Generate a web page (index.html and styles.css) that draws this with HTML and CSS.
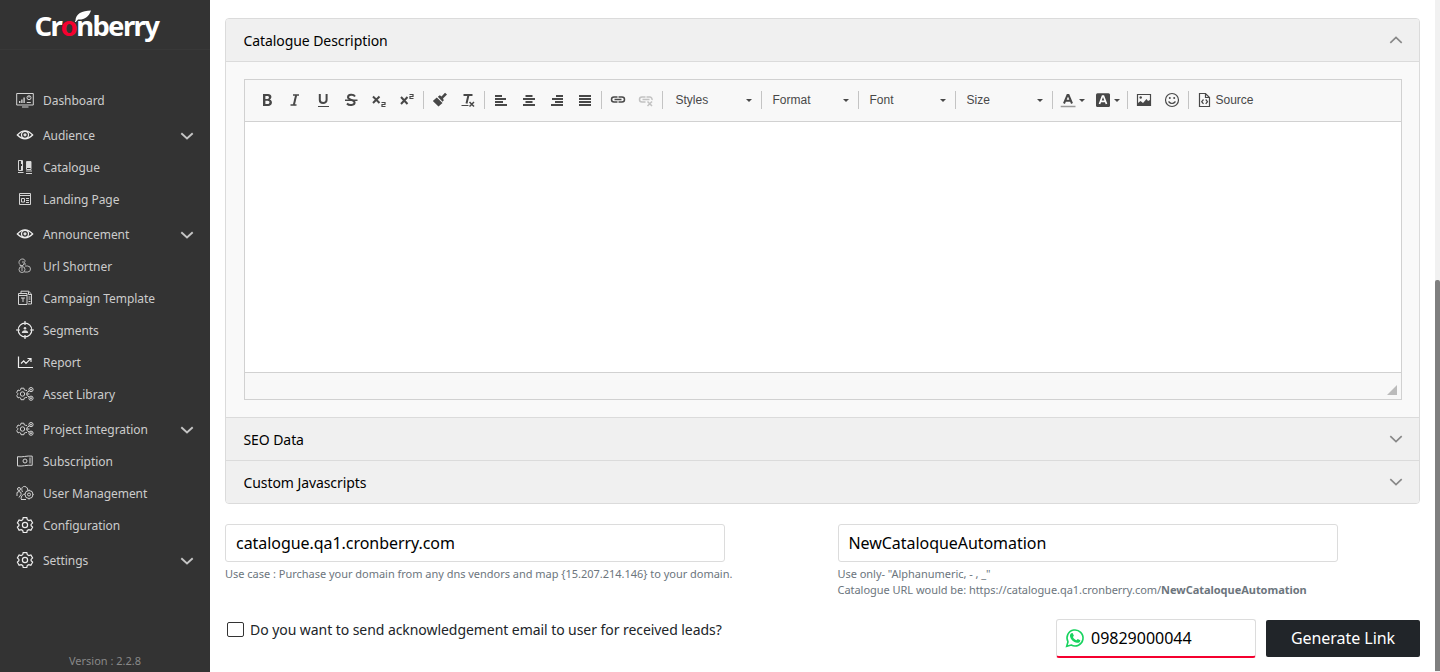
FILE: index.html
```html
<!DOCTYPE html>
<html lang="en">
<head>
<meta charset="utf-8">
<title>Cronberry</title>
<link rel="stylesheet" href="styles.css">
</head>
<body>
<svg class="defs" aria-hidden="true">
  <symbol id="eye" viewBox="0 0 18 18"><path d="M1.300 9Q9 .7 16.700 9Q9 16.700 1.300 9Z"/><circle cx="9" cy="8.800" r="3.500"/><circle class="fill" cx="9" cy="8.800" r="1.600"/></symbol>
  <symbol id="gear" viewBox="0 0 18 18"><path d="M7.200 1.600h3.600l.5 2.100 1.500.9 2.100-.7 1.700 3-1.500 1.500v1.300l1.500 1.500-1.700 3-2.100-.6-1.500.8-.5 2.100H7.200l-.5-2.100-1.500-.8-2.100.6-1.700-3 1.500-1.500V8.400L1.400 6.900l1.700-3 2.100.7 1.500-.9z"/><circle cx="9" cy="9" r="2.600"/></symbol>
  <symbol id="gears" viewBox="0 0 18 18"><path d="M11 5.500 9.500 5.300 8.300 4.900 7.900 3.200H5L4.600 4.900l-1 .6-1.600-.5L.7 7.400l1.100 1.100v1l-1.100 1.100L2 12.900l1.600-.5 1 .6.4 1.700h2.900l.4-1.700 1.200-.4 1.500-.2"/><circle cx="6.500" cy="9" r="2.200"/><path d="M13.200 6 10.800 7.700v2.600l2.400 1.700M10.800 9h2.600"/><circle cx="15" cy="4.600" r="2.100"/><circle cx="15" cy="13.200" r="2.100"/><circle class="fill" cx="15" cy="4.600" r=".9"/><circle class="fill" cx="15" cy="13.200" r=".9"/></symbol>
  <symbol id="down" viewBox="0 0 14 10"><path d="M1.300 2.200 7 7.500 12.700 2.200"/></symbol>
</svg>
<div class="app">
  <aside class="sidebar">
    <div class="brand">
      <div class="logo">Cr<span class="logo-o">o</span>nberry</div>
      <svg class="leaf" width="20" height="14" viewBox="0 0 20 14"><path d="M2.500 11.500C2.500 5 9 1.500 18 1.500C16 8 11 11 5 10.500L2.800 13H1.800Z"/></svg>
    </div>
    <nav class="nav">
      <a class="item"><svg class="ico" viewBox="0 0 18 18"><path d="M.7 2.500h16.600v11.500H.7zM6 16h6.500"/><path class="thick" d="M3.700 12v-2M5.900 12V8.500M8.100 12V6.500"/><circle cx="13" cy="6.700" r="2"/><path d="M10.800 11.500h4M13 6.700V5"/></svg><span>Dashboard</span></a>
      <a class="item drop"><svg class="ico bright"><use href="#eye"/></svg><span>Audience</span><svg class="chev"><use href="#down"/></svg></a>
      <a class="item"><svg class="ico" viewBox="0 0 18 18"><path d="M2.500 2.500h4v10h-4zM10.500 3.500h4.500v8h-4.500zM2 14.500h5.500M10 13h6M10 15.500h6"/><path class="fill" d="M5 3h2v3H5zM5 8h2v4H5zM11 4h4v6h-4z"/></svg><span>Catalogue</span></a>
      <a class="item"><svg class="ico" viewBox="0 0 18 18"><path d="M3.500 3.500h11v11h-11zM3.500 5.500h11M5.500 8.500h3v3.500h-3zM10 8.500h3M10 10.500h3M10 12.500h3"/></svg><span>Landing Page</span></a>
      <a class="item drop"><svg class="ico bright"><use href="#eye"/></svg><span>Announcement</span><svg class="chev"><use href="#down"/></svg></a>
      <a class="item"><svg class="ico thin" viewBox="0 0 18 18"><path d="M4 7.500C1.500 5.500 4 1.500 7 2c2 .3 2.500 2 1.500 3.500L7 8.500H4zM6 5h2"/><circle cx="6" cy="12.500" r="3"/><path d="M5 11h2M5 13h2M9 9h2.500a3 3 0 0 1 0 6H8.500M9 8V6"/></svg><span>Url Shortner</span></a>
      <a class="item"><svg class="ico" viewBox="0 0 18 18"><path d="M5 4V2.200h7.500L15.500 5v10H12M12.500 2.500V5.500h3M2.500 4.500h8.500V15.500H2.500zM2.500 6.500H11M5 9h4M7 9v4M12.500 8h2M12.500 10h2M12.500 12.500h2"/></svg><span>Campaign Template</span></a>
      <a class="item"><svg class="ico bright" viewBox="0 0 18 18"><circle cx="9" cy="9" r="6.800"/><path d="M9 0v4M9 14v4M0 9h4M14 9h4"/><circle class="fill" cx="9" cy="7.300" r="1.300"/><path class="fill" d="M5.800 12c0-3.600 6.400-3.600 6.400 0z"/></svg><span>Segments</span></a>
      <a class="item"><svg class="ico bright" viewBox="0 0 18 18"><path d="M2.500 3.500v11h14.500M5 10.500l2.700-2.700L10 10.300l4.500-4.500M11.500 5.500H15V9"/></svg><span>Report</span></a>
      <a class="item"><svg class="ico"><use href="#gears"/></svg><span>Asset Library</span></a>
      <a class="item drop"><svg class="ico"><use href="#gears"/></svg><span>Project Integration</span><svg class="chev"><use href="#down"/></svg></a>
      <a class="item"><svg class="ico" viewBox="0 0 18 18"><path d="M1.500 4.700c5 .8 9-1.200 14.700-.6v9.200c-5.700-.6-9.700 1.400-14.700.6zM14 5.500v6"/><circle cx="9" cy="9" r="2"/></svg><span>Subscription</span></a>
      <a class="item"><svg class="ico" viewBox="0 0 18 18"><circle cx="3" cy="5" r="1.500"/><path d="M1 12V8.500l2-1 2 1v2L3 13.500M6.500 8C4.500 4 7 2 9 2.500s3 2 2.500 4M5 15.500h5M5 15c0-3 2-5 4-5"/><circle cx="13" cy="10.500" r="4"/><circle cx="13" cy="10.500" r="1.500"/><path d="M13 5.500v1M13 14.500v1M17.500 10.500h-1"/></svg><span>User Management</span></a>
      <a class="item"><svg class="ico bright"><use href="#gear"/></svg><span>Configuration</span></a>
      <a class="item drop"><svg class="ico bright"><use href="#gear"/></svg><span>Settings</span><svg class="chev"><use href="#down"/></svg></a>
    </nav>
    <div class="version">Version : 2.2.8</div>
  </aside>

  <main class="main">
    <section class="accordion">
      <header class="acc-head"><span>Catalogue Description</span><svg class="acc-chev up"><use href="#down"/></svg></header>
      <div class="acc-body">
        <div class="editor">
          <div class="toolbar">
            <span class="btn"><svg viewBox="0 0 16 16"><path class="fill" fill-rule="evenodd" d="M4 2h5c4.200 0 4.300 4.500 1.700 5.600 3.500 1 2.900 6.400-1.500 6.400H4zM6.400 4v2.900h2c2.100 0 2.100-2.900 0-2.900zm0 4.700V12h2.300c2.400 0 2.400-3.300 0-3.300z"/></svg></span>
            <span class="btn"><svg viewBox="0 0 16 16"><path class="w2" d="M9.200 3 6.800 13"/><path class="w15" d="M6 3h6M3.500 13h6"/></svg></span>
            <span class="btn"><svg viewBox="0 0 16 16"><path class="w2" d="M4.800 2v6c0 4 6.800 4 6.800 0V2"/><path d="M3 14.500h11"/></svg></span>
            <span class="btn"><svg viewBox="0 0 16 16"><path class="w2" d="M12 4.500C10.500 2 5 2.200 5 5.200S11.600 7.500 11.600 10.500 6 13.800 4 11.500"/><path class="w15" d="M2 8.200h12.500"/></svg></span>
            <span class="btn"><svg viewBox="0 0 16 16"><path class="w2" d="M2 4.500 8.500 11M8.500 4.500 2 11"/><path d="M10.500 10.500H14v2h-3v2h3.500"/></svg></span>
            <span class="btn"><svg viewBox="0 0 16 16"><path class="w2" d="M2 5 8.500 12M8.500 5 2 12"/><path d="M10.500 2.500H14v2h-3v2h3.500"/></svg></span>
            <i class="sep"></i>
            <span class="btn"><svg viewBox="0 0 16 16"><path class="fill" d="m4.800 5.500 5.700 5.500-4 3.500L.8 9zM5.800 4.700l2-1.400 1.700 1.200L13 .8l2 1.700-4 4 .8 1.700-1.200 1.500z"/></svg></span>
            <span class="btn"><svg viewBox="0 0 16 16"><path class="w2" d="M3.500 3h9M8.500 3 6.500 11.500"/><path d="M1.500 13.500h7"/><path class="w15" d="m9.500 10 4.500 4.500M14 10l-4.500 4.500"/></svg></span>
            <i class="sep"></i>
            <span class="btn"><svg viewBox="0 0 16 16"><path class="w2" d="M2 4h7M2 7h11M2 10h8M2 13h12"/></svg></span>
            <span class="btn"><svg viewBox="0 0 16 16"><path class="w2" d="M4.500 4h7M2 7h12M4.500 10h7M2 13h12"/></svg></span>
            <span class="btn"><svg viewBox="0 0 16 16"><path class="w2" d="M7 4h7M3 7h11M6 10h8M2 13h12"/></svg></span>
            <span class="btn"><svg viewBox="0 0 16 16"><path class="w2" d="M2 4h12M2 7h12M2 10h12M2 13h12"/></svg></span>
            <i class="sep"></i>
            <span class="btn"><svg viewBox="0 0 16 16"><path class="w15" d="M7.500 5H4a2.500 2.500 0 0 0 0 5h3.500M8.500 5H12a2.500 2.500 0 0 1 0 5H8.500M4.500 7.500h7"/></svg></span>
            <span class="btn off"><svg viewBox="0 0 16 16"><path class="w15" d="M7.500 5H4a2.500 2.500 0 0 0 0 5h3.500M8.500 5H12a2.500 2.500 0 0 1 2 3M4.500 7.500h7M9.500 9.500l4.500 4.500M14 9.500 9.500 14"/></svg></span>
            <i class="sep"></i>
            <span class="combo first">Styles<b class="arrow"></b></span><i class="sep"></i>
            <span class="combo">Format<b class="arrow"></b></span><i class="sep"></i>
            <span class="combo">Font<b class="arrow"></b></span><i class="sep"></i>
            <span class="combo">Size<b class="arrow"></b></span><i class="sep"></i>
            <span class="btn color"><svg viewBox="0 0 16 16"><path class="w2" d="M4 11.500 7.500 3h1L12 11.500M5.500 8.800h5"/><path class="underbar" d="M.7 14.500h14.800"/></svg><b class="arrow"></b></span>
            <span class="btn color"><svg viewBox="0 0 16 16"><rect class="fill" x="1" y="1.200" width="14" height="13.800" rx="1.500"/><path class="white" d="M4.500 12 7.500 4h1l3 8M6 9.300h4"/></svg><b class="arrow"></b></span>
            <i class="sep"></i>
            <span class="btn"><svg viewBox="0 0 16 16"><path d="M1.500 2.500h13v11h-13z"/><path class="fill" d="M2 13v-2l2.500-2L7 11l3.500-4 1.500 2 2-1v5z"/><circle class="fill" cx="4.700" cy="5.500" r="1.200"/></svg></span>
            <span class="btn"><svg viewBox="0 0 16 16"><circle cx="8" cy="8" r="6.500"/><path d="M4.500 9.500q3.500 4 7 0"/><circle class="fill" cx="5.800" cy="6" r="1"/><circle class="fill" cx="10.200" cy="6" r="1"/></svg></span>
            <i class="sep"></i>
            <span class="source"><svg viewBox="0 0 16 16"><path d="M3.500 1.500h6l4 4v9h-10zM9.500 1.500v4h4"/><path d="M7.500 7.500 5.700 9.700l1.800 2.200M9.700 7.500l1.800 2.200-1.800 2.200"/></svg>Source</span>
          </div>
          <div class="canvas"></div>
          <div class="status"><svg width="10" height="10" viewBox="0 0 10 10"><path d="M10 0v10H0z"/></svg></div>
        </div>
      </div>
      <header class="acc-head line"><span>SEO Data</span><svg class="acc-chev"><use href="#down"/></svg></header>
      <header class="acc-head line"><span>Custom Javascripts</span><svg class="acc-chev"><use href="#down"/></svg></header>
    </section>

    <div class="fields">
      <div class="field">
        <div class="input">catalogue.qa1.cronberry.com</div>
        <div class="hint">Use case : Purchase your domain from any dns vendors and map {15.207.214.146} to your domain.</div>
      </div>
      <div class="field">
        <div class="input">NewCataloqueAutomation</div>
        <div class="hint tight">Use only- "Alphanumeric, - , _"<br>Catalogue URL would be: https://catalogue.qa1.cronberry.com/<strong>NewCataloqueAutomation</strong></div>
      </div>
    </div>

    <div class="actions">
      <label class="check"><i class="box"></i><span>Do you want to send acknowledgement email to user for received leads?</span></label>
      <div class="phone"><svg width="20" height="20" viewBox="0 0 20 20"><path class="ring" d="M1.700 18.300 3 13.800A8 8 0 1 1 6.200 17z"/><path class="handset" d="M6.300 5.200 7.600 5l1.300 2.800-1 1.300c.9 1.700 2 2.600 3.600 3.200l1.200-1.400 2.600 1.300c.2 1.800-1.600 2.900-3.200 2.600C8.400 14.200 5.500 11 5 8.200 4.900 7 5.300 5.900 6.300 5.200z"/></svg><span>09829000044</span></div>
      <button class="generate">Generate Link</button>
    </div>
  </main>
  <div class="scroll"><div class="thumb"></div></div>
</div>
</body>
</html>
```

FILE: styles.css
```css
* { box-sizing: border-box; }
body { margin: 0; font-family: "Noto Sans", "Open Sans", sans-serif; color: #212529; background: #fff; overflow: hidden; }
.defs { position: absolute; width: 0; height: 0; }
.defs .fill { fill: #ddd; stroke: none; }
.app { display: flex; height: 672px; }

.sidebar { flex: 0 0 210px; display: flex; flex-direction: column; background: #333; }
.brand { position: relative; height: 50px; padding: 6px 0 0 34.500px; border-bottom: 1px solid #383838; }
.logo { font-weight: 700; font-size: 27.500px; line-height: 40px; letter-spacing: -1.650px; color: #fff; }
.logo-o { color: #f5002f; }
.leaf { position: absolute; left: 73px; top: 9px; fill: #fff; }
.nav { display: flex; flex-direction: column; padding-top: 34px; }
.item { display: flex; align-items: center; height: 32px; padding: 0 16px; font-size: 12px; letter-spacing: -.05px; color: #ccc; }
.item.drop { margin-top: 3px; }
.item span { flex: 1; margin-left: 9px; }
.ico { width: 18px; height: 18px; fill: none; stroke: #d4d4d4; stroke-width: 1; }
.ico.bright { stroke: #eee; stroke-width: 1.200; }
.ico.thin { stroke-width: .8; }
.ico .fill { fill: #ddd; stroke: none; }
.ico .thick { stroke-width: 1.400; }
.chev { width: 14px; height: 10px; margin-top: 2px; fill: none; stroke: #c4c4c4; stroke-width: 1.900; }
.version { margin-top: auto; padding-bottom: 3px; text-align: center; font-size: 11px; line-height: 16px; color: #888; }

.main { flex: 1; min-width: 0; padding: 18px 15px 0; }
.accordion { border: 1px solid #dbdbdb; border-radius: 4px; overflow: hidden; background: #f9f9f9; }
.acc-head { display: flex; align-items: center; justify-content: space-between; height: 42px; padding: 0 16px 0 17.500px; background: #f0f0f0; font-size: 14px; letter-spacing: -.08px; color: #000; }
.acc-head.line { height: 43px; border-top: 1px solid #dbdbdb; }
.acc-chev { width: 14px; height: 10px; fill: none; stroke: #888; stroke-width: 1.700; }
.acc-chev.up { transform: rotate(180deg); margin-top: -1px; }
.acc-body { border-top: 1px solid #dbdbdb; padding: 17px 17px 17px 18px; }
.editor { border: 1px solid #d1d1d1; }
.toolbar { display: flex; align-items: center; height: 42px; padding: 0 8px 1px; border-bottom: 1px solid #d1d1d1; background: #f8f8f8; font: 12px "Liberation Sans", Arial, sans-serif; color: #484848; }
.btn { display: flex; align-items: center; width: 28px; padding: 0 6px; }
.btn svg, .source svg { flex: none; width: 16px; height: 16px; fill: none; stroke: #484848; stroke-width: 1.200; }
.btn .fill { fill: #484848; stroke: none; }
.btn .w15 { stroke-width: 1.500; }
.btn .w2 { stroke-width: 2; }
.btn .underbar { stroke: #999; stroke-width: 1.500; }
.btn .white { stroke: #fff; stroke-width: 1.700; }
.btn.off { opacity: .3; }
.btn.color { width: 35px; padding: 0 0 0 5px; }
.btn.color .arrow { margin-left: 3px; }
.sep { width: 1px; height: 18px; margin: 0 2px; background: #c4c4c4; }
.combo { display: flex; align-items: center; justify-content: space-between; width: 92px; padding: 0 7px 0 8.500px; }
.combo.first { margin-left: 2px; }
.arrow { width: 0; height: 0; border: 3px solid transparent; border-top-color: #484848; border-bottom: 0; }
.source { display: flex; align-items: center; gap: 3.500px; padding-left: 5px; }
.canvas { height: 250px; background: #fff; }
.status { display: flex; justify-content: flex-end; align-items: flex-end; height: 27px; padding: 0 4px 4px; border-top: 1px solid #d1d1d1; background: #f8f8f8; }
.status svg { fill: #bbb; }

.fields { display: flex; margin-top: 20px; }
.field { flex: 0 0 612.500px; }
.input { display: flex; align-items: center; width: 500px; height: 38px; padding: 0 10px; border: 1px solid #dcdcdc; border-radius: 3px; font-size: 16px; letter-spacing: -.05px; color: #000; }
.hint { margin-top: 4px; font-size: 11px; letter-spacing: -.02px; line-height: 16px; color: #6c757d; white-space: nowrap; }
.hint.tight { letter-spacing: -.035px; }
.actions { display: flex; margin-top: 21px; }
.check { display: flex; align-items: center; height: 21px; padding-left: 2px; font-size: 14px; letter-spacing: -.06px; }
.box { width: 17px; height: 15px; margin-right: 6px; border: 1px solid #333; border-radius: 2px; }
.phone { display: flex; align-items: center; gap: 6px; width: 200px; height: 39px; margin-left: auto; padding: 0 8px; border: 1px solid #dcdcdc; border-bottom: 2px solid #f5002f; border-radius: 3px; font-size: 16px; color: #000; }
.ring { fill: none; stroke: #18d35f; stroke-width: 1.600; }
.handset { fill: #18d35f; }
.generate { width: 154px; height: 37px; margin: 1px 0 0 10px; padding: 0 0 2px; border: 0; border-radius: 2px; background: #212529; color: #fff; font: 16px "Noto Sans", sans-serif; letter-spacing: -.05px; }
.scroll { flex: 0 0 5px; padding-top: 280px; background: #f1f1f1; }
.thumb { height: 391px; border-radius: 2px 2px 0 0; background: #7f7f7f; }
```
